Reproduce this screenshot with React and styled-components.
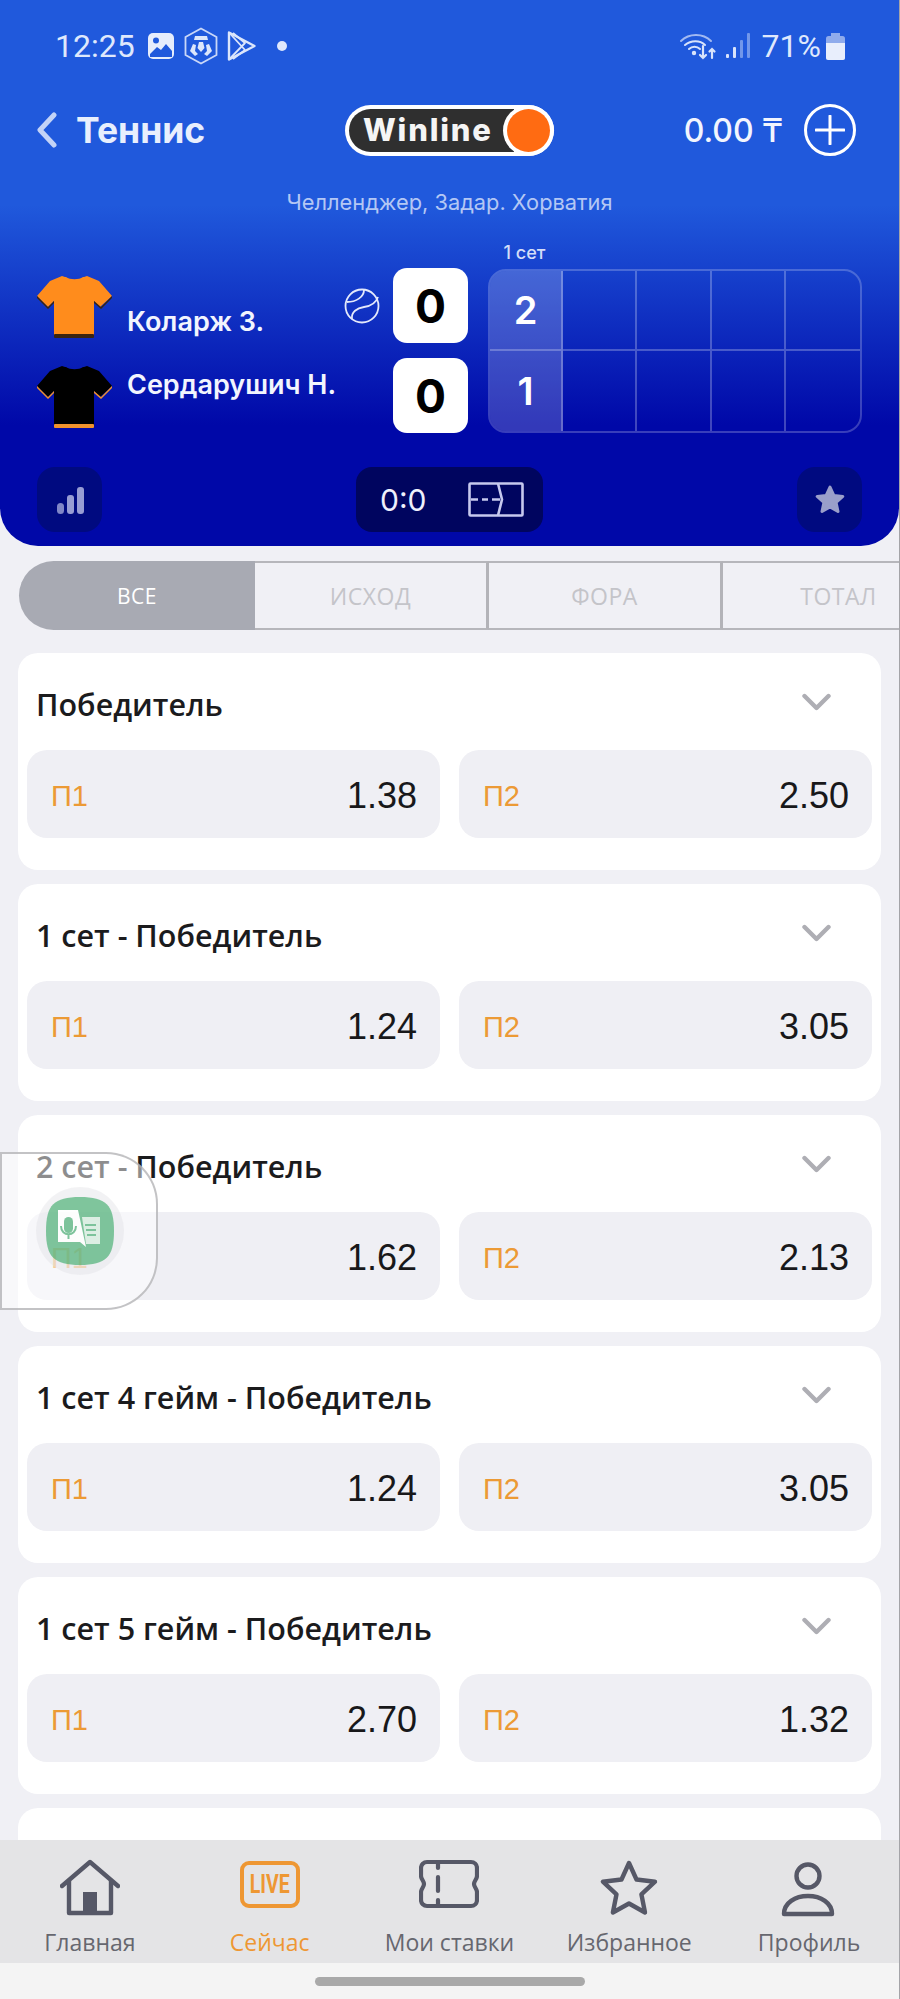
import React from "react";
import styled, { createGlobalStyle } from "styled-components";

const markets = [
  { title: "Победитель", p1: "1.38", p2: "2.50" },
  { title: "1 сет - Победитель", p1: "1.24", p2: "3.05" },
  { title: "2 сет - Победитель", p1: "1.62", p2: "2.13" },
  { title: "1 сет 4 гейм - Победитель", p1: "1.24", p2: "3.05" },
  { title: "1 сет 5 гейм - Победитель", p1: "2.70", p2: "1.32" },
];

const tabs = ["ВСЕ", "ИСХОД", "ФОРА", "ТОТАЛ"];

export default function App() {
  return (
    <Screen>
      <GlobalStyle />
      <Hero>
        <StatusBar>
          <StatusGroup>
            <Clock>12:25</Clock>
            <GalleryIcon />
            <HexIcon />
            <PlayIcon />
            <NotifyDot />
          </StatusGroup>
          <StatusGroup>
            <WifiIcon />
            <SignalIcon />
            <Percent>71%</Percent>
            <BatteryIcon />
          </StatusGroup>
        </StatusBar>

        <TopBar>
          <BackLink>
            <svg width="22" height="36" viewBox="0 0 22 36" fill="none">
              <path d="M18 3 4 18l14 15" stroke="#c3d3f7" strokeWidth="5" strokeLinecap="round" strokeLinejoin="round" />
            </svg>
            <PageTitle>Теннис</PageTitle>
          </BackLink>
          <Logo>
            <LogoText>Winline</LogoText>
            <LogoDot />
          </Logo>
          <Balance>
            <BalanceValue>0.00 ₸</BalanceValue>
            <PlusButton>
              <svg width="30" height="30" viewBox="0 0 30 30" fill="none">
                <path d="M15 1v28M1 15h28" stroke="#fff" strokeWidth="3" strokeLinecap="round" />
              </svg>
            </PlusButton>
          </Balance>
        </TopBar>

        <Tournament>Челленджер, Задар. Хорватия</Tournament>

        <Match>
          <Teams>
            <TeamRow>
              <Jersey body="#ff8c1c" trim="#3a2410" />
              <TeamName $place="end">Коларж З.</TeamName>
              <BallIcon />
              <Score>0</Score>
            </TeamRow>
            <TeamRow>
              <Jersey body="#000" trim="#f0922c" />
              <TeamName $place="start">Сердарушич Н.</TeamName>
              <Score>0</Score>
            </TeamRow>
          </Teams>
          <Sets>
            <SetLabel>1 сет</SetLabel>
            <SetTable>
              {[0, 1].map((row) => (
                <React.Fragment key={row}>
                  <SetCell $active $row={row}>{row === 0 ? 2 : 1}</SetCell>
                  {[1, 2, 3, 4].map((col) => (
                    <SetCell key={col} $row={row} $last={col === 4} />
                  ))}
                </React.Fragment>
              ))}
            </SetTable>
          </Sets>
        </Match>

        <HeroActions>
          <SquareButton>
            <svg width="30" height="30" viewBox="0 0 30 30" fill="#979dd4">
              <rect x="2" y="18" width="7" height="11" rx="3.5" opacity="0.85" />
              <rect x="12" y="10" width="7" height="19" rx="3" />
              <rect x="22" y="2" width="7" height="27" rx="3" />
            </svg>
          </SquareButton>
          <GamePill>
            <GameScore>0:0</GameScore>
            <svg width="56" height="35" viewBox="0 0 56 35" fill="none" stroke="#c6c9ee" strokeWidth="2.6">
              <rect x="1.5" y="1.5" width="53" height="32" rx="1" />
              <path d="M30 1.5l4 16-4 16" />
              <path d="M3 17.5h7M14 17.5h6M24 17.5h8" />
            </svg>
          </GamePill>
          <SquareButton>
            <svg width="32" height="32" viewBox="0 0 32 32" fill="#9a9fca" stroke="#9a9fca" strokeWidth="3" strokeLinejoin="round">
              <path d="M16 3l3.8 8.4 9 1-6.7 6.1 1.9 9-8-4.6-8 4.6 1.9-9-6.7-6.1 9-1z" />
            </svg>
          </SquareButton>
        </HeroActions>
      </Hero>

      <TabBar>
        {tabs.map((tab, i) => (
          <Tab key={tab} $active={i === 0}>{tab}</Tab>
        ))}
      </TabBar>

      <Content>
        {markets.map((market) => (
          <Card key={market.title}>
            <CardHeader>
              <CardTitle>{market.title}</CardTitle>
              <svg width="29" height="19" viewBox="0 0 29 19" fill="none" style={{ marginBottom: 3 }}>
                <path d="M2.5 3 14.5 15 26.5 3" stroke="#aeaeb4" strokeWidth="4.4" strokeLinecap="round" strokeLinejoin="round" />
              </svg>
            </CardHeader>
            <Odds>
              <OddButton>
                <OddLabel>П1</OddLabel>
                <OddValue>{market.p1}</OddValue>
              </OddButton>
              <OddButton>
                <OddLabel>П2</OddLabel>
                <OddValue>{market.p2}</OddValue>
              </OddButton>
            </Odds>
          </Card>
        ))}
        <Card />
      </Content>

      <FloatingWidget>
        <WidgetHalo>
          <WidgetIcon />
        </WidgetHalo>
      </FloatingWidget>

      <BottomNav>
        <NavItem>
          <NavIconBox>
            <svg width="60" height="58" viewBox="0 0 60 58" fill="none" stroke="#565867" strokeWidth="4.4" strokeLinecap="round" strokeLinejoin="round">
              <path d="M2 27 30 3l28 24" />
              <path d="M9 22v32h42V22" />
              <path d="M23 54V33h14v21z" fill="#565867" strokeWidth="0" />
            </svg>
          </NavIconBox>
          <NavLabel>Главная</NavLabel>
        </NavItem>
        <NavItem $active>
          <NavIconBox>
            <LiveBadge>
              <LiveText>LIVE</LiveText>
            </LiveBadge>
          </NavIconBox>
          <NavLabel>Сейчас</NavLabel>
        </NavItem>
        <NavItem>
          <NavIconBox>
            <svg width="60" height="50" viewBox="0 0 60 50" fill="none" stroke="#565867" strokeWidth="4.2" strokeLinecap="round" strokeLinejoin="round">
              <path d="M8 3h44a6 6 0 0 1 6 6v8c0 3-3 5-3 8s3 5 3 8v8a6 6 0 0 1-6 6H8a6 6 0 0 1-6-6v-8c0-3 3-5 3-8s-3-5-3-8V9a6 6 0 0 1 6-6z" />
              <path d="M19 3v6M19 18v14M19 41v6" />
            </svg>
          </NavIconBox>
          <NavLabel>Мои ставки</NavLabel>
        </NavItem>
        <NavItem>
          <NavIconBox>
            <svg width="60" height="58" viewBox="0 0 60 58" fill="none" stroke="#565867" strokeWidth="4.4" strokeLinejoin="round">
              <path d="M30 4l7.5 16.5 18.5 2.2-13.600 12.600 3.600 18.200L30 44.500 13.900 53.500l3.600-18.200L3.900 22.700l18.600-2.200z" />
            </svg>
          </NavIconBox>
          <NavLabel>Избранное</NavLabel>
        </NavItem>
        <NavItem>
          <NavIconBox>
            <svg width="60" height="58" viewBox="0 0 60 58" fill="none" stroke="#565867" strokeWidth="4.4" strokeLinejoin="round">
              <circle cx="29" cy="17" r="11.500" />
              <path d="M5 55c0-11 11-18 24-18s24 7 24 18z" />
            </svg>
          </NavIconBox>
          <NavLabel>Профиль</NavLabel>
        </NavItem>
      </BottomNav>

      <GestureArea>
        <HomeBar />
      </GestureArea>
    </Screen>
  );
}

function GalleryIcon() {
  return (
    <svg width="28" height="28" viewBox="0 0 28 28" style={{ marginLeft: 12 }}>
      <rect x="1" y="1" width="26" height="26" rx="5" fill="#e6edfc" />
      <circle cx="9" cy="8.500" r="3" fill="#2059dc" />
      <path d="M3 22l7-7 4 3 5-6 6 7v6H3z" fill="#2059dc" />
    </svg>
  );
}

function HexIcon() {
  return (
    <svg width="34" height="38" viewBox="0 0 34 38" fill="none" style={{ marginLeft: 9 }}>
      <path d="M17 1.500 32.500 10v18L17 36.500 1.500 28V10z" stroke="#c9d7f8" strokeWidth="1.800" />
      <path d="M11 9h12l1 4H10z" fill="#dce6fb" />
      <path d="M15 15h4l1.500 6-3.500 4-3.500-4z" fill="#dce6fb" />
      <path d="M9 17l3 1-1 6 3 3-3 2-5-5zM25 17l-3 1 1 6-3 3 3 2 5-5z" fill="#dce6fb" />
    </svg>
  );
}

function PlayIcon() {
  return (
    <svg width="30" height="32" viewBox="0 0 30 32" fill="none" stroke="#dce6fb" strokeWidth="2.400" strokeLinejoin="round" style={{ marginLeft: 9 }}>
      <path d="M2 2.500 27.500 16 2 29.500z" />
      <path d="M2 2.500 18 20 6 29M6 3l12 10L2 29.500" strokeWidth="1.800" />
    </svg>
  );
}

function WifiIcon() {
  return (
    <svg width="38" height="30" viewBox="0 0 38 30" fill="none" stroke="#d8e3fb" strokeWidth="2" strokeLinecap="round">
      <path d="M2 10C10 2 24 2 32 10" opacity="0.7" />
      <path d="M6 14c6-5 15-5 20 0" />
      <path d="M10 18c3-3 8-3 11 0" />
      <circle cx="15" cy="22" r="1.200" fill="#d8e3fb" />
      <path d="M24 15v12M21 24l3 3 3-3" strokeWidth="2.200" />
      <path d="M33 27v-9M30.500 20.500 33 18l2.500 2.500" strokeWidth="2.200" />
    </svg>
  );
}

function SignalIcon() {
  return (
    <svg width="24" height="26" viewBox="0 0 24 26" fill="#d8e3fb" style={{ marginLeft: 9 }}>
      <rect x="0" y="21" width="3" height="4" rx="1" />
      <rect x="7" y="14" width="3" height="11" rx="1" />
      <rect x="14" y="7" width="3" height="18" opacity="0.45" rx="1" />
      <rect x="21" y="0" width="3" height="25" opacity="0.45" rx="1" />
    </svg>
  );
}

function BatteryIcon() {
  return (
    <svg width="19" height="27" viewBox="0 0 19 27" style={{ marginLeft: 5 }}>
      <rect x="5" y="0" width="9" height="3" fill="#8fabec" />
      <rect x="0" y="3" width="19" height="24" rx="2.500" fill="#8fabec" />
      <path d="M0 10h19v14.500a2.500 2.500 0 0 1-2.500 2.500h-14A2.500 2.500 0 0 1 0 24.500z" fill="#e8eefc" />
    </svg>
  );
}

function Jersey({ body, trim }) {
  return (
    <svg width="75" height="64" viewBox="0 0 75 64" style={{ flexShrink: 0 }}>
      <path
        d="M25 2l3 1h1c4 3 13 3 17 0h1l3-1 12 5 13 15-12 11-6-6v35H17V27l-6 6L0 22 13 7z"
        fill={body}
      />
      <path d="M0 22l11 11 6-6v2l-6 6L0 24zM75 22 64 33l-7-6v2l7 6 11-11z" fill={trim} />
      <rect x="17" y="60" width="40" height="4" rx="1" fill={trim} />
    </svg>
  );
}

function BallIcon() {
  return (
    <svg width="36" height="36" viewBox="0 0 36 36" fill="none" stroke="#e4e9fb" strokeWidth="1.800" style={{ flexShrink: 0, marginRight: 13 }}>
      <circle cx="18" cy="18" r="16.500" />
      <path d="M20 2c0 7-8 12-17 12" />
      <path d="M8 31c-1-7 5-11 12-12s12-4 14-10" />
    </svg>
  );
}

function WidgetIcon() {
  return (
    <svg width="68" height="68" viewBox="0 0 68 68">
      <path d="M34 0c26 0 34 8 34 34S60 68 34 68 0 60 0 34 8 0 34 0z" fill="#5cb581" />
      <path d="M36 20h18v27H40z" fill="#d5ecdd" />
      <path d="M12 13h20l8 37-6-5H12z" fill="#fff" />
      <rect x="18" y="20" width="9" height="16" rx="4.500" fill="#5cb581" />
      <path d="M15 29c0 11 15 11 15 0M22.500 37v5" fill="none" stroke="#5cb581" strokeWidth="2" />
      <path d="M39 28h11M40 33h10M41 38h9" stroke="#5cb581" strokeWidth="2" />
    </svg>
  );
}

const GlobalStyle = createGlobalStyle`
  html, body {
    margin: 0;
    padding: 0;
    background: #f0f0f5;
  }
  * {
    box-sizing: border-box;
  }
`;

const Screen = styled.div`
  position: relative;
  width: 900px;
  height: 1999px;
  display: flex;
  flex-direction: column;
  overflow: hidden;
  background: #f0f0f5;
  border-right: 1px solid #a4a4a8;
  font-family: "Open Sans", "Noto Sans", sans-serif;
`;

const Hero = styled.header`
  height: 546px;
  flex-shrink: 0;
  background: linear-gradient(180deg, #2059dc 0, #2059dc 205px, #0008a8 425px, #0008a8 100%);
  border-radius: 0 0 38px 38px;
  color: #fff;
  font-family: Inter, "Noto Sans", sans-serif;
`;

const StatusBar = styled.div`
  height: 92px;
  padding: 0 54px 0 55px;
  display: flex;
  align-items: center;
  justify-content: space-between;
`;

const StatusGroup = styled.div`
  display: flex;
  align-items: center;
`;

const Clock = styled.span`
  font: 400 32px Roboto, sans-serif;
  color: #dfe8fc;
`;

const Percent = styled.span`
  font: 400 32px Roboto, sans-serif;
  color: #dfe8fc;
  margin-left: 12px;
`;

const NotifyDot = styled.span`
  width: 10px;
  height: 10px;
  border-radius: 50%;
  background: #dfe8fc;
  margin-left: 20px;
`;

const TopBar = styled.div`
  height: 76px;
  padding: 0 43px;
  display: grid;
  grid-template-columns: 1fr auto 1fr;
  align-items: center;
`;

const BackLink = styled.div`
  display: flex;
  align-items: center;
  gap: 18px;
  margin-left: -7px;
`;

const PageTitle = styled.span`
  font-size: 35.500px;
  font-weight: 700;
  color: #e8effd;
`;

const Logo = styled.div`
  width: 209px;
  height: 51px;
  padding: 4px;
  display: flex;
  border-radius: 26px;
  background: #fff;
`;

const LogoText = styled.div`
  flex: 1;
  padding-left: 14px;
  border-radius: 22px 0 0 22px;
  background: #2f2f2f;
  color: #f5f5f5;
  font-size: 31px;
  font-weight: 800;
  line-height: 42px;
  letter-spacing: 1.800px;
`;

const LogoDot = styled.div`
  position: relative;
  width: 43px;
  height: 43px;
  margin-left: -7px;
  border-radius: 50%;
  background: #ff6b12;
  box-shadow: 0 0 0 4px #fff;
`;

const Balance = styled.div`
  display: flex;
  align-items: center;
  justify-content: flex-end;
  gap: 21px;
`;

const BalanceValue = styled.span`
  font-size: 32px;
  font-weight: 500;
  color: #f2f5fe;
`;

const PlusButton = styled.div`
  width: 52px;
  height: 52px;
  display: flex;
  align-items: center;
  justify-content: center;
  border: 3px solid #fff;
  border-radius: 50%;
`;

const Tournament = styled.div`
  height: 68px;
  line-height: 68px;
  text-align: center;
  font-size: 21.800px;
  color: #b4c7f4;
`;

const Match = styled.div`
  padding: 0 37px;
  display: flex;
  align-items: flex-end;
  gap: 20px;
`;

const Teams = styled.div`
  width: 431px;
  display: flex;
  flex-direction: column;
  gap: 15px;
`;

const TeamRow = styled.div`
  height: 75px;
  display: flex;
  align-items: center;
`;

const TeamName = styled.span`
  flex: 1;
  align-self: ${(p) => (p.$place === "end" ? "flex-end" : "flex-start")};
  margin-left: 15px;
  padding: ${(p) => (p.$place === "end" ? "0 0 7px" : "13px 0 0")};
  font-size: 27px;
  font-weight: 600;
  line-height: 28px;
  white-space: nowrap;
  color: #f2f5fe;
`;

const Score = styled.div`
  width: 75px;
  height: 75px;
  flex-shrink: 0;
  display: flex;
  align-items: center;
  justify-content: center;
  border-radius: 14px;
  background: #fff;
  color: #000;
  font-size: 46px;
  font-weight: 700;
`;

const Sets = styled.div`
  flex: 1;
`;

const SetLabel = styled.div`
  width: 73px;
  height: 33px;
  line-height: 33px;
  text-align: center;
  font-size: 18px;
  font-weight: 500;
  white-space: nowrap;
  color: #d3ddf8;
`;

const SetTable = styled.div`
  height: 164px;
  display: grid;
  grid-template-columns: 73px repeat(4, 1fr);
  grid-template-rows: 1fr 1fr;
  border: 2px solid rgba(255, 255, 255, 0.22);
  border-radius: 18px;
  overflow: hidden;
`;

const SetCell = styled.div`
  display: flex;
  align-items: center;
  justify-content: center;
  font-size: 38px;
  font-weight: 600;
  border-right: ${(p) => (p.$last ? "none" : "2px solid rgba(255, 255, 255, 0.25)")};
  border-bottom: ${(p) => (p.$row === 0 ? "2px solid rgba(255, 255, 255, 0.25)" : "none")};
  background: ${(p) => (p.$active ? "rgba(255, 255, 255, 0.2)" : "transparent")};
`;

const HeroActions = styled.div`
  margin-top: 34px;
  padding: 0 37px;
  display: flex;
  justify-content: space-between;
`;

const SquareButton = styled.div`
  width: 65px;
  height: 65px;
  display: flex;
  align-items: center;
  justify-content: center;
  border-radius: 18px;
  background: #000a80;
`;

const GamePill = styled.div`
  width: 187px;
  height: 65px;
  padding: 0 19px 0 24px;
  display: flex;
  align-items: center;
  justify-content: space-between;
  border-radius: 16px;
  background: #00055f;
`;

const GameScore = styled.span`
  font-size: 30px;
  font-weight: 400;
  color: #eef0fc;
`;

const TabBar = styled.nav`
  height: 69px;
  margin: 15px 0 23px;
  padding-left: 19px;
  display: flex;
  flex-shrink: 0;
  overflow: hidden;
`;

const Tab = styled.div`
  width: ${(p) => (p.$active ? "236px" : "234px")};
  flex-shrink: 0;
  display: flex;
  align-items: center;
  justify-content: center;
  font-size: ${(p) => (p.$active ? "21px" : "23px")};
  letter-spacing: 0.5px;
  border-radius: ${(p) => (p.$active ? "35px 0 0 35px" : "0")};
  background: ${(p) => (p.$active ? "#a8aab3" : "transparent")};
  color: ${(p) => (p.$active ? "#fff" : "#c4c4c9")};
  border-top: ${(p) => (p.$active ? "none" : "2px solid #b6b6bb")};
  border-bottom: ${(p) => (p.$active ? "none" : "2px solid #b6b6bb")};
  border-right: ${(p) => (p.$active ? "none" : "3px solid #b3b3b8")};
`;

const Content = styled.main`
  flex: 1;
  min-height: 0;
  padding: 0 18px 0 18px;
  display: flex;
  flex-direction: column;
  gap: 14px;
  overflow: hidden;
`;

const Card = styled.section`
  height: 217px;
  padding: 0 9px;
  flex-shrink: 0;
  border-radius: 20px;
  background: #fff;
`;

const CardHeader = styled.div`
  height: 97px;
  padding: 5px 41px 0 9px;
  display: flex;
  align-items: center;
  justify-content: space-between;
`;

const CardTitle = styled.h3`
  margin: 0;
  font-size: 30.500px;
  font-weight: 600;
  color: #1b1b1d;
`;

const Odds = styled.div`
  display: grid;
  grid-template-columns: 1fr 1fr;
  gap: 19px;
`;

const OddButton = styled.div`
  height: 88px;
  padding: 4px 23px 0 24px;
  display: flex;
  align-items: center;
  justify-content: space-between;
  border-radius: 20px;
  background: #efeff4;
`;

const OddLabel = styled.span`
  font: 400 29px "Liberation Sans", Arial, sans-serif;
  color: #ec9a35;
`;

const OddValue = styled.span`
  font: 400 36px "Liberation Sans", Arial, sans-serif;
  color: #18181a;
`;

const FloatingWidget = styled.div`
  position: absolute;
  left: 0;
  top: 1152px;
  width: 158px;
  height: 158px;
  display: flex;
  align-items: center;
  justify-content: center;
  border: 2px solid rgba(170, 170, 172, 0.7);
  border-radius: 0 52px 52px 0;
  background: rgba(255, 255, 255, 0.5);
`;

const WidgetHalo = styled.div`
  width: 88px;
  height: 88px;
  margin-left: 1px;
  display: flex;
  align-items: center;
  justify-content: center;
  border-radius: 50%;
  background: rgba(225, 225, 230, 0.55);
  opacity: 0.78;
`;

const BottomNav = styled.nav`
  height: 123px;
  flex-shrink: 0;
  padding-top: 19px;
  display: grid;
  grid-template-columns: repeat(5, 1fr);
  background: #e4e4e6;
`;

const NavItem = styled.div`
  display: flex;
  flex-direction: column;
  align-items: center;
  color: ${(p) => (p.$active ? "#ee9733" : "#66676f")};
`;

const NavIconBox = styled.div`
  height: 58px;
  display: flex;
  align-items: flex-start;
  justify-content: center;
`;

const NavLabel = styled.span`
  margin-top: 9px;
  font-size: 23px;
  line-height: 32px;
  white-space: nowrap;
`;

const LiveBadge = styled.div`
  width: 60px;
  height: 47px;
  margin-top: 2px;
  display: flex;
  align-items: center;
  justify-content: center;
  border: 4.500px solid #ee9733;
  border-radius: 9px;
`;

const LiveText = styled.span`
  display: block;
  font: 700 25px Roboto, sans-serif;
  color: #ee9733;
  transform: scaleX(0.78);
`;

const GestureArea = styled.div`
  height: 36px;
  flex-shrink: 0;
  display: flex;
  justify-content: center;
  padding-top: 14px;
  background: #f4f4f4;
`;

const HomeBar = styled.div`
  width: 270px;
  height: 9px;
  border-radius: 5px;
  background: #a9a9a9;
`;
